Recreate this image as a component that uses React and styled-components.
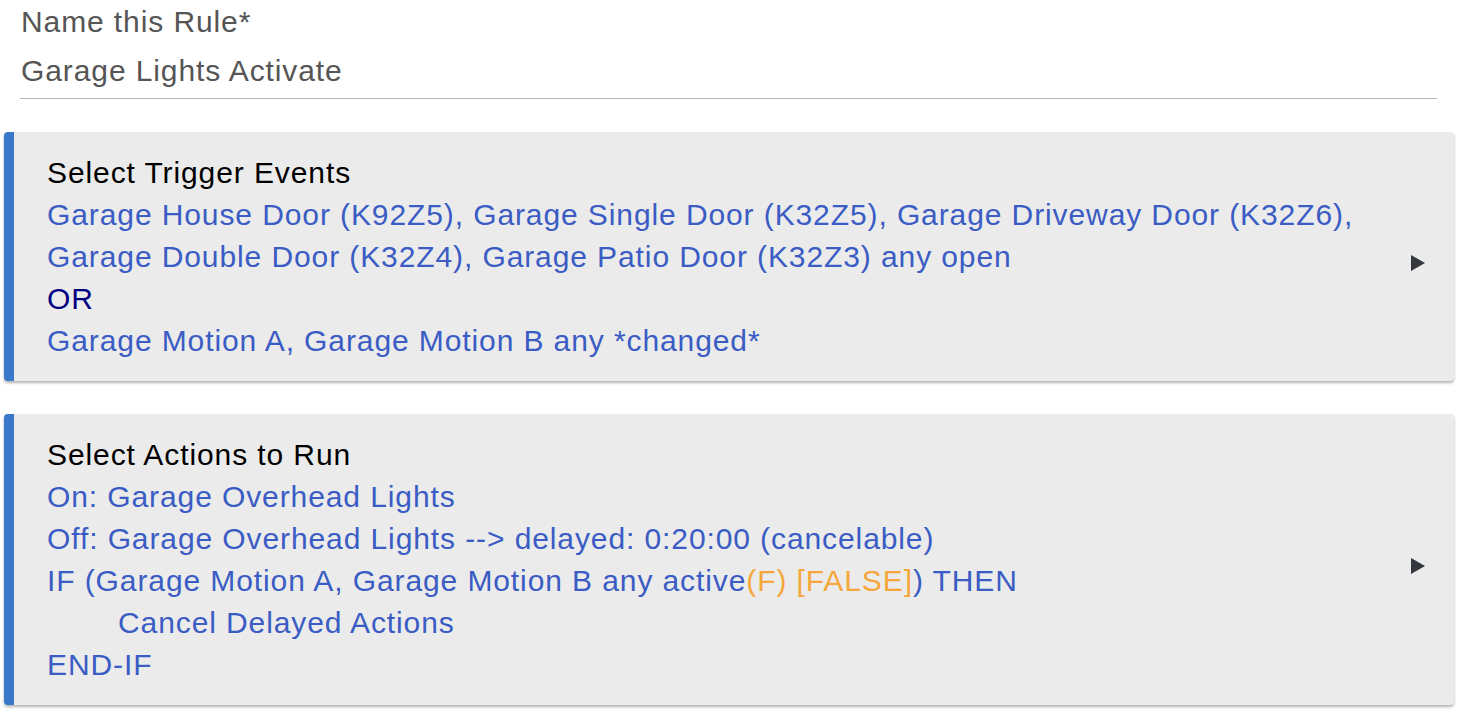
import React from 'react';
import styled, { createGlobalStyle } from 'styled-components';

const GlobalStyle = createGlobalStyle`
  body {
    margin: 0;
    background: #fff;
    font-family: "Liberation Sans", Arial, Helvetica, sans-serif;
  }
`;

const Page = styled.div`
  width: 1468px;
  padding-bottom: 16px;
  font-size: 30px;
  letter-spacing: 0.9px;
`;

const NameField = styled.div`
  padding: 0 31px 0 20px;
  margin-bottom: 33px;
`;

const FieldLabel = styled.div`
  line-height: 44px;
  color: #555;
  padding-left: 1px;
`;

const FieldInput = styled.div`
  margin-top: 4px;
  line-height: 46px;
  color: #555;
  padding: 0 0 4px 1px;
  border-bottom: 1px solid #b8b8b8;
`;

const Card = styled.div`
  display: flex;
  align-items: center;
  margin: 0 14px 33px 4px;
  background: #ebebeb;
  border-left: 10px solid #3a78c9;
  border-radius: 4px;
  box-shadow: 0 2px 3px rgba(0, 0, 0, 0.3);
  padding: 20px 29px 19px 33px;
`;

const Body = styled.div`
  flex: 1;
  line-height: 42px;
`;

const Title = styled.div`
  color: #000;
`;

const Line = styled.div`
  color: ${(p) => (p.$navy ? '#000080' : '#3a5cc4')};
  padding-left: ${(p) => (p.$indent ? '71px' : '0')};
  white-space: nowrap;
`;

const Warn = styled.span`
  color: #f5a73b;
`;

const Arrow = styled.div`
  width: 0;
  height: 0;
  margin-top: 12px;
  border-left: 14px solid #34383c;
  border-top: 8px solid transparent;
  border-bottom: 8px solid transparent;
`;

export default function App() {
  return (
    <Page>
      <GlobalStyle />
      <NameField>
        <FieldLabel>Name this Rule*</FieldLabel>
        <FieldInput>Garage Lights Activate</FieldInput>
      </NameField>

      <Card>
        <Body>
          <Title>Select Trigger Events</Title>
          <Line>Garage House Door (K92Z5), Garage Single Door (K32Z5), Garage Driveway Door (K32Z6),</Line>
          <Line>Garage Double Door (K32Z4), Garage Patio Door (K32Z3) any open</Line>
          <Line $navy>OR</Line>
          <Line>Garage Motion A, Garage Motion B any *changed*</Line>
        </Body>
        <Arrow />
      </Card>

      <Card>
        <Body>
          <Title>Select Actions to Run</Title>
          <Line>On: Garage Overhead Lights</Line>
          <Line>Off: Garage Overhead Lights --&gt; delayed: 0:20:00 (cancelable)</Line>
          <Line>
            IF (Garage Motion A, Garage Motion B any active<Warn>(F) [FALSE]</Warn>) THEN
          </Line>
          <Line $indent>Cancel Delayed Actions</Line>
          <Line>END-IF</Line>
        </Body>
        <Arrow />
      </Card>
    </Page>
  );
}
